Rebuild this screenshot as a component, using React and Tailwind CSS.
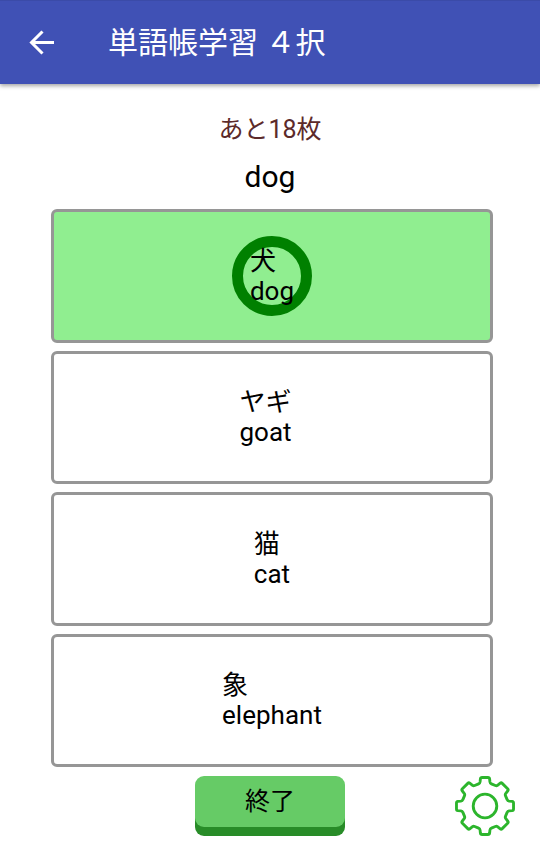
const choices = [
  { word: "犬", reading: "dog", correct: true },
  { word: "ヤギ", reading: "goat\u00a0\u00a0" },
  { word: "猫", reading: "cat" },
  { word: "象", reading: "elephant" },
];

function Header() {
  return (
    <header className="relative flex h-[84px] items-center border-t border-[#3b4ba8] bg-[#4051b5] text-white shadow-[0_2px_4px_rgba(0,0,0,0.35)]">
      <button type="button" aria-label="戻る" className="ml-6 p-1">
        <svg viewBox="0 0 28 28" className="h-7 w-7" fill="none" stroke="currentColor" strokeWidth="3">
          <path d="M26 13.500H4M14.500 2.500L3.500 13.500L14.500 24.500" />
        </svg>
      </button>
      <h1 className="ml-12 text-[30px] leading-10">単語帳学習 ４択</h1>
    </header>
  );
}

function Choice({ word, reading, correct }) {
  return (
    <button
      type="button"
      className={`relative flex min-h-24 items-center justify-center rounded-md border-3 border-[#969696] text-left text-[26px] leading-[30px] ${
        correct ? "bg-[#90ee90]" : "bg-white"
      }`}
    >
      {correct && (
        <span className="absolute top-1/2 left-1/2 h-20 w-20 -translate-x-1/2 -translate-y-1/2 rounded-full border-[11px] border-[#008000]" />
      )}
      <span className="relative">
        <span className="block">{word}</span>
        <span className="block">{reading}</span>
      </span>
    </button>
  );
}

function Gear() {
  return (
    <svg viewBox="-30.500 -30.500 61 61" className="h-[60px] w-[60px]" fill="none" stroke="#2cb52c" strokeWidth="2.900" strokeLinejoin="round">
      <circle r="12" />
      <path d="M-3 -29H3Q4.500 -29 4.700 -27.500L5 -24.500Q5.200 -23 6.500 -22.500L10.500 -20.800Q11.700 -20.300 12.700 -21L15.500 -23.200Q16.500 -24 17.500 -23L23 -17.500Q24 -16.500 23.200 -15.500L21 -12.700Q20.300 -11.700 20.800 -10.500L22.500 -6.500Q23 -5.200 24.500 -5L27.500 -4.700Q29 -4.500 29 -3V3Q29 4.500 27.500 4.700L24.500 5Q23 5.200 22.500 6.500L20.800 10.500Q20.300 11.700 21 12.700L23.200 15.500Q24 16.500 23 17.500L17.500 23Q16.500 24 15.500 23.200L12.700 21Q11.700 20.300 10.500 20.800L6.500 22.500Q5.200 23 5 24.500L4.700 27.500Q4.500 29 3 29H-3Q-4.500 29 -4.700 27.500L-5 24.500Q-5.200 23 -6.500 22.500L-10.500 20.800Q-11.700 20.300 -12.700 21L-15.500 23.200Q-16.500 24 -17.500 23L-23 17.500Q-24 16.500 -23.200 15.500L-21 12.700Q-20.300 11.700 -20.800 10.500L-22.500 6.500Q-23 5.200 -24.500 5L-27.500 4.700Q-29 4.500 -29 3V-3Q-29 -4.500 -27.500 -4.700L-24.500 -5Q-23 -5.200 -22.500 -6.500L-20.800 -10.500Q-20.300 -11.700 -21 -12.700L-23.200 -15.500Q-24 -16.500 -23 -17.500L-17.500 -23Q-16.500 -24 -15.500 -23.200L-12.700 -21Q-11.700 -20.300 -10.500 -20.800L-6.500 -22.500Q-5.200 -23 -5 -24.500L-4.700 -27.500Q-4.500 -29 -3 -29Z" />
    </svg>
  );
}

export default function App() {
  return (
    <div className="flex min-h-screen flex-col bg-white font-[Roboto,'Noto_Sans_CJK_JP',sans-serif] text-black">
      <Header />
      <main className="flex flex-1 flex-col">
        <p className="mt-7 text-center text-[25px] leading-[35px] text-[#5c2a2a]">あと18枚</p>
        <p className="mt-[10px] text-center text-[30px] leading-10">dog</p>
        <div className="mt-3 grid flex-1 auto-rows-fr gap-2 pr-[47px] pl-[51px]">
          {choices.map((choice) => (
            <Choice key={choice.word} {...choice} />
          ))}
        </div>
      </main>
      <footer className="mt-[9px] mb-[14px] grid grid-cols-[1fr_auto_1fr] items-center">
        <button
          type="button"
          className="col-start-2 mb-[9px] h-[51px] w-[150px] rounded-[9px] bg-[#66cb66] text-[25px] leading-[30px] shadow-[0_9px_0_#288c28]"
        >
          終了
        </button>
        <button type="button" aria-label="設定" className="mr-[25px] justify-self-end">
          <Gear />
        </button>
      </footer>
    </div>
  );
}
